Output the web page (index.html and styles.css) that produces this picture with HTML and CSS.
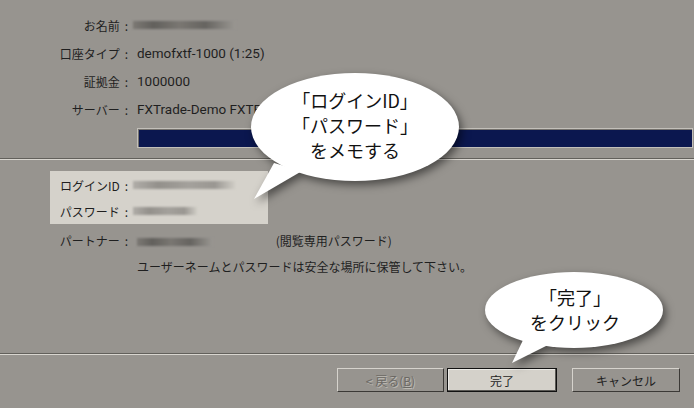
FILE: index.html
```html
<!DOCTYPE html>
<html>

<head>
    <meta charset="UTF-8">
    <meta name="viewport" content="width=device-width, initial-scale=1.0">
    <title>口座情報</title>
    <link rel="stylesheet" href="styles.css">
</head>

<body>
    <div class="wizard">
        <div class="info">
            <div class="row">
                <span class="label">お名前<span class="colon">:</span></span>
                <span class="blur blur--name"></span>
            </div>
            <div class="row">
                <span class="label">口座タイプ<span class="colon">:</span></span>
                <span class="value">demofxtf-1000 (1:25)</span>
            </div>
            <div class="row">
                <span class="label">証拠金<span class="colon">:</span></span>
                <span class="value">1000000</span>
            </div>
            <div class="row">
                <span class="label">サーバー<span class="colon">:</span></span>
                <span class="value">FXTrade-Demo FXTF</span>
            </div>
            <div class="progress">
                <div class="progress__bar"></div>
            </div>
        </div>

        <div class="separator"></div>

        <div class="account">
            <div class="account__box">
                <div class="row row--account">
                    <span class="label">ログインID<span class="colon">:</span></span>
                    <span class="blur blur--login"></span>
                </div>
                <div class="row row--account">
                    <span class="label">パスワード<span class="colon">:</span></span>
                    <span class="blur blur--password"></span>
                </div>
            </div>
            <div class="row row--account row--partner">
                <span class="label">パートナー<span class="colon">:</span></span>
                <span class="partner">
                    <span class="blur blur--partner"></span>
                    <span class="note">(閲覧専用パスワード)</span>
                </span>
            </div>
            <p class="message">ユーザーネームとパスワードは安全な場所に保管して下さい。</p>
        </div>

        <div class="separator"></div>

        <div class="buttons">
            <button class="button button--disabled">&lt; 戻る(<u>B</u>)</button>
            <button class="button button--default">完了</button>
            <button class="button button--cancel">キャンセル</button>
        </div>

        <div class="bubble bubble--memo">
            <svg class="bubble__shape" width="240" height="150" viewBox="0 0 240 150">
                <ellipse cx="115" cy="62" rx="104" ry="54" fill="#fff" />
                <polygon points="14,134 34,98 62,106" fill="#fff" />
            </svg>
            <div class="bubble__text">「ログインID」<br>「パスワード」<br>をメモする</div>
        </div>

        <div class="bubble bubble--finish">
            <svg class="bubble__shape" width="200" height="110" viewBox="0 0 200 110">
                <ellipse cx="104" cy="48" rx="89" ry="38" fill="#fff" />
                <polygon points="42,101 54,76 80,82" fill="#fff" />
            </svg>
            <div class="bubble__text">「完了」<br>をクリック</div>
        </div>
    </div>
</body>

</html>
```

FILE: styles.css
```css
*,
*::before,
*::after {
    box-sizing: border-box;
    margin: 0;
    padding: 0;
}

body {
    width: 694px;
    height: 408px;
    overflow: hidden;
    background-color: #97948f;
    font-family: "Noto Sans CJK JP", "Noto Sans", sans-serif;
    font-size: 12px;
    color: #1f1f1f;
}

.wizard {
    position: relative;
    height: 408px;
}

.info {
    padding-top: 11px;
    padding-bottom: 10px;
}

.row {
    display: grid;
    grid-template-columns: 128px auto;
    column-gap: 9px;
    align-items: center;
    height: 28px;
}

.label {
    text-align: right;
    white-space: nowrap;
}

.colon {
    margin-left: 5px;
}

.value {
    white-space: nowrap;
    font-family: Roboto, "Noto Sans CJK JP", sans-serif;
    font-size: 13.5px;
}

.blur {
    display: inline-block;
    height: 8px;
    filter: blur(1.2px);
    background: linear-gradient(90deg, #7c7974, #62605c 20%, #7a7772 45%, #666460 70%, #9a9792);
}

.blur--name {
    width: 103px;
    margin-left: -4px;
}

.progress {
    margin: 5px 0 0 137px;
    width: 556px;
    height: 20px;
    border: 1px solid #c3c0ba;
}

.progress__bar {
    height: 100%;
    border-top: 1px solid #74716c;
    border-left: 1px solid #74716c;
    background-color: #0b174f;
}

.separator {
    height: 2px;
    border-top: 1px solid #62605b;
    border-bottom: 1px solid #d9d6d0;
}

.account {
    height: 193px;
    padding: 11px 0 0 50px;
}

.account__box {
    width: 218px;
    height: 53px;
    padding-top: 1px;
    background-color: #d5d2cb;
}

.row--account {
    grid-template-columns: 78px auto;
    height: 26px;
}

.account__box .blur {
    margin-left: -4px;
    background: linear-gradient(90deg, #b0ada8, #93908b 25%, #a4a19c 55%, #9a9792 80%, #cfccc5);
}

.blur--login {
    width: 102px;
}

.blur--password {
    width: 64px;
}

.row--partner {
    margin-top: 3px;
}

.partner {
    white-space: nowrap;
}

.blur--partner {
    width: 76px;
    vertical-align: middle;
}

.note {
    margin-left: 60px;
}

.message {
    margin-left: 87px;
    line-height: 28px;
}

.buttons {
    display: flex;
    justify-content: flex-end;
    padding: 13px 14px 0 0;
}

.button {
    width: 108px;
    height: 24px;
    font-family: inherit;
    font-size: 12px;
    color: #1f1f1f;
    background-color: #97948f;
    border: 1px solid;
    border-color: #d6d3cd #3b3936 #3b3936 #d6d3cd;
}

.button--disabled {
    width: 107px;
    color: #6c6964;
    text-shadow: 1px 1px 0 #bdbab4;
}

.button--default {
    width: 110px;
    margin-left: 3px;
    background-color: #d4d1ca;
    border: 1px solid #111;
    box-shadow: inset -1px -1px 0 #5a5854, inset 1px 1px 0 #ecebe7;
}

.button--cancel {
    margin-left: 15px;
}

.bubble {
    position: absolute;
}

.bubble__shape {
    display: block;
    filter: drop-shadow(3px 4px 4px rgba(0, 0, 0, 0.5));
}

.bubble__text {
    position: absolute;
    font-size: 18px;
    line-height: 25px;
    text-align: center;
    color: #111;
}

.bubble--memo {
    left: 240px;
    top: 65px;
}

.bubble--memo .bubble__text {
    left: 15px;
    top: 23px;
    width: 200px;
}

.bubble--finish {
    left: 470px;
    top: 262px;
}

.bubble--finish .bubble__text {
    left: 15px;
    top: 23px;
    width: 180px;
}
```
